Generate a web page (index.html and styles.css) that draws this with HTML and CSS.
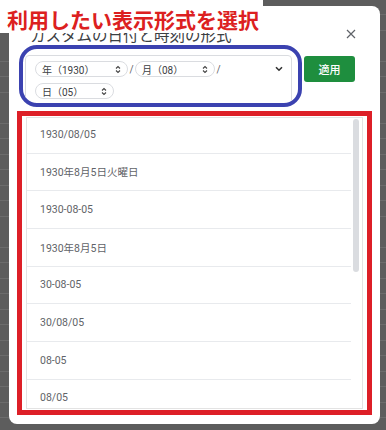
FILE: index.html
```html
<!DOCTYPE html>
<html lang="ja">
<head>
<meta charset="utf-8">
<title>カスタムの日付と時刻の形式</title>
<link rel="stylesheet" href="styles.css">
</head>
<body>
<div class="page">
  <div class="dialog">
    <div class="head">
      <span class="title">カスタムの日付と時刻の形式</span>
      <svg class="close" width="10" height="10" viewBox="0 0 10 10"><path d="M1 1L9 9M9 1L1 9" stroke="#5f6368" stroke-width="1.2" fill="none"/></svg>
    </div>
    <div class="controls">
      <div class="ring-blue">
        <div class="picker">
          <div class="prow">
            <div class="pill w1"><span>年（1930）</span><svg width="6" height="9" viewBox="0 0 6 9"><path d="M1 3.5L3 1.5L5 3.5M1 5.5L3 7.5L5 5.5" stroke="#444" stroke-width="1.1" fill="none"/></svg></div>
            <span class="sep">/</span>
            <div class="pill w2"><span>月（08）</span><svg width="6" height="9" viewBox="0 0 6 9"><path d="M1 3.5L3 1.5L5 3.5M1 5.5L3 7.5L5 5.5" stroke="#444" stroke-width="1.1" fill="none"/></svg></div>
            <span class="sep">/</span>
            <svg class="chev" width="8" height="6" viewBox="0 0 8 6"><path d="M1 1.2L4 4.2L7 1.2" stroke="#333" stroke-width="1.6" fill="none"/></svg>
          </div>
          <div class="prow">
            <div class="pill w3"><span>日（05）</span><svg width="6" height="9" viewBox="0 0 6 9"><path d="M1 3.5L3 1.5L5 3.5M1 5.5L3 7.5L5 5.5" stroke="#444" stroke-width="1.1" fill="none"/></svg></div>
          </div>
        </div>
      </div>
      <button class="apply">適用</button>
    </div>
    <div class="ring-red">
      <div class="list">
        <div class="items">
          <div class="item">1930/08/05</div>
          <div class="item">1930年8月5日火曜日</div>
          <div class="item">1930-08-05</div>
          <div class="item">1930年8月5日</div>
          <div class="item">30-08-05</div>
          <div class="item">30/08/05</div>
          <div class="item">08-05</div>
          <div class="item">08/05</div>
        </div>
        <div class="scroll"><div class="thumb"></div></div>
      </div>
    </div>
  </div>
</div>
<div class="callout">利用したい表示形式を選択</div>
</body>
</html>
```
FILE: styles.css
```css
html, body {
  margin: 0;
  padding: 0;
}
body {
  width: 386px;
  height: 430px;
  overflow: hidden;
  position: relative;
  background-color: #5d5d5d;
  background-image: repeating-linear-gradient(to bottom, transparent 0, transparent 14.5px, #6c6c6c 14.5px, #6c6c6c 15.5px);
  font-family: Roboto, "Noto Sans CJK JP", sans-serif;
}
.page {
  padding: 6px 6px 6px 9px;
}
.dialog {
  background: #fff;
  border-radius: 8px;
  height: 418px;
  display: flex;
  flex-direction: column;
  overflow: hidden;
}
.head {
  display: flex;
  align-items: center;
  justify-content: space-between;
  padding: 18px 24px 1px 21px;
  height: 20px;
}
.title {
  font-family: "Noto Sans CJK JP", sans-serif;
  font-size: 15.5px;
  line-height: 20px;
  color: #3c4043;
}
.close {
  display: block;
}
.controls {
  display: flex;
  align-items: flex-start;
  padding-left: 10px;
  gap: 2px;
}
.ring-blue {
  box-sizing: border-box;
  width: 283px;
  height: 62px;
  border: 4px solid #3b42b0;
  border-radius: 18px;
  padding: 6px 6px 0 2px;
  overflow: hidden;
}
.picker {
  box-sizing: border-box;
  height: 52px;
  border: 1px solid #dadce0;
  border-radius: 4px;
  padding: 5px 8px 0 9px;
  display: flex;
  flex-direction: column;
  gap: 6px;
}
.prow {
  display: flex;
  align-items: center;
  height: 16px;
}
.pill {
  box-sizing: border-box;
  height: 16px;
  border: 1px solid #dadce0;
  border-radius: 8px;
  padding: 0 6px 0 6px;
  display: flex;
  align-items: center;
  justify-content: space-between;
  font-family: Roboto, "Noto Sans CJK JP", sans-serif;
  font-size: 10px;
  color: #3c4043;
}
.pill svg {
  display: block;
}
.w1 { width: 93px; }
.w2 { width: 80px; }
.w3 { width: 79px; }
.sep {
  width: 7px;
  text-align: center;
  font-size: 10px;
  color: #5f6368;
}
.chev {
  display: block;
  margin-left: auto;
}
.apply {
  margin-top: 11px;
  width: 51px;
  height: 26px;
  border: none;
  border-radius: 3px;
  background: #1e8e3e;
  color: #fff;
  font-family: "Noto Sans CJK JP", sans-serif;
  font-size: 11px;
  font-weight: 500;
  padding: 0;
}
.ring-red {
  box-sizing: border-box;
  margin: 4px 0 0 8px;
  width: 355px;
  height: 304px;
  border: 5px solid #dd1f27;
  padding: 1px 4px 1px 4px;
}
.list {
  box-sizing: border-box;
  height: 100%;
  border: 1px solid #e3e3e3;
  display: flex;
  overflow: hidden;
}
.items {
  flex: 1;
  margin-top: -2.2px;
}
.item {
  box-sizing: border-box;
  height: 37.7px;
  border-bottom: 1px solid #e8eaed;
  padding-left: 13px;
  display: flex;
  align-items: center;
  font-size: 10.5px;
  color: #5f6368;
}
.scroll {
  width: 11px;
  flex: none;
}
.thumb {
  margin: 1px 0 0 2px;
  width: 6px;
  height: 153px;
  border-radius: 3px;
  background: #dadce0;
}
.callout {
  position: absolute;
  left: 0;
  top: 0;
  width: 263px;
  height: 33px;
  box-sizing: border-box;
  background: #fff;
  padding: 8px 0 0 7px;
  font-family: "Noto Sans CJK JP", sans-serif;
  font-weight: 700;
  font-size: 21px;
  line-height: 22px;
  color: #dc2020;
  white-space: nowrap;
}
```
